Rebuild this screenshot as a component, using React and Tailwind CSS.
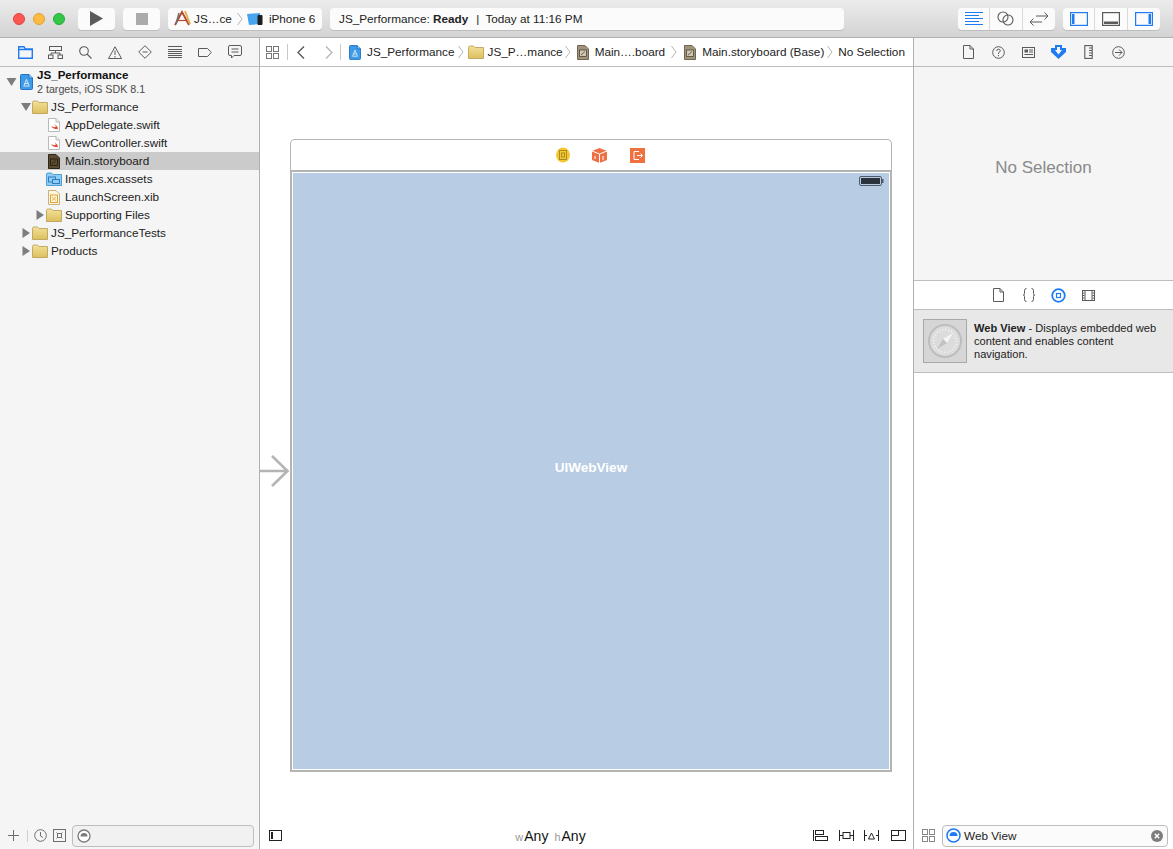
import React from "react";

const S = ({ w = 16, h = 16, vb, children, className = "", stroke = "#5a5a5a", sw = 1.2, fill = "none" }) => (
  <svg width={w} height={h} viewBox={vb || `0 0 ${w} ${h}`} fill={fill} stroke={stroke} strokeWidth={sw} className={`shrink-0 block ${className}`}>{children}</svg>
);

const Tri = ({ open, className = "" }) => (
  <svg width="10" height="10" viewBox="0 0 10 10" className={`shrink-0 ${className}`}>
    {open ? <path d="M0 1 H10 L5 9 Z" fill="#7d7d7d" /> : <path d="M1.5 0 L9 5 L1.5 10 Z" fill="#7d7d7d" />}
  </svg>
);

const Folder = ({ w = 16, h = 14 }) => (
  <svg width={w} height={h} viewBox="0 0 16 14" className="shrink-0">
    <defs><linearGradient id="fg" x1="0" y1="0" x2="0" y2="1"><stop offset="0" stopColor="#f3e19a" /><stop offset="1" stopColor="#dcbf5e" /></linearGradient></defs>
    <path d="M.5 2.5 Q.5 1 2 1 H5.5 L7 2.5 H15.5 V13.5 H.5 Z" fill="url(#fg)" stroke="#b59c4c" strokeWidth=".8" />
  </svg>
);

const Swift = () => (
  <svg width="12" height="14" viewBox="0 0 12 14" className="shrink-0">
    <path d="M.5 .5 H8 L11.5 4 V13.5 H.5 Z" fill="#fff" stroke="#b9b9b9" />
    <path d="M8 .5 V4 H11.5" fill="#eee" stroke="#b9b9b9" />
    <path d="M3 8 Q6 10 8 8.5 Q7.5 7 6 6 Q8.5 7.5 9.5 9 Q10 10.5 9.5 11.5 Q9 10.8 8 11 Q5 11.5 3 8Z" fill="#e2492f" />
  </svg>
);

const Doc = ({ dark }) => (
  <svg width="12" height="15" viewBox="0 0 12 15" className="shrink-0">
    <path d="M.5 .5 H8 L11.5 4 V14.5 H.5 Z" fill={dark ? "#5c4b30" : "#a2947c"} stroke={dark ? "#2d2518" : "#6f6650"} />
    <rect x="2.5" y="5" width="7" height="6.5" fill={dark ? "#5c4b30" : "#cfc7b6"} stroke={dark ? "#1f1a10" : "#4f4737"} strokeWidth=".8" />
    <path d="M4 10 L8 6.5" stroke={dark ? "#1f1a10" : "#4f4737"} strokeWidth=".8" />
  </svg>
);

const Proj = ({ w = 13, h = 16 }) => (
  <svg width={w} height={h} viewBox="0 0 13 16" className="shrink-0">
    <path d="M.5 1.5 Q.5 .5 1.5 .5 H9 L12.5 4 V14.5 Q12.5 15.5 11.5 15.5 H1.5 Q.5 15.5 .5 14.5 Z" fill="#3f9ae8" stroke="#2273c4" />
    <path d="M9 .5 V4 H12.5" fill="#a8d4f7" stroke="#2273c4" />
    <path d="M3.5 12 H9.5 M4 11.5 L6.5 5.5 L9 11.5 M4.8 9.5 H8.2" stroke="#e6f3fe" fill="none" strokeWidth=".9" />
  </svg>
);

const Row = ({ pl, tri, icon, text, selected, bold }) => (
  <div className={`h-[18px] flex items-center shrink-0 ${selected ? "bg-[#cbcbcb]" : ""}`} style={{ paddingLeft: pl }}>
    <div className="w-[11px] -ml-[11px] flex items-center shrink-0">{tri !== undefined && <Tri open={tri} />}</div>
    <div className="w-[16px] flex justify-center shrink-0">{icon}</div>
    <span className={`ml-[3px] text-[#1c1c1c] whitespace-nowrap ${bold ? "font-bold" : ""}`}>{text}</span>
  </div>
);

const Pill = ({ className = "", children }) => (
  <div className={`h-[22px] bg-[#fbfbfb] rounded-[4px] shadow-[0_1px_0_#bdbdbd] flex items-center ${className}`}>{children}</div>
);

const Seg = ({ children, last }) => (
  <div className={`w-[32.33px] h-full flex items-center justify-center ${last ? "" : "border-r border-[#dadada]"}`}>{children}</div>
);

const Chev = () => (
  <svg width="6" height="14" viewBox="0 0 6 14" className="shrink-0"><path d="M.5 1 L5 7 L.5 13" fill="none" stroke="#b5b5b5" /></svg>
);

const Nav = ({ children }) => <div className="w-[30px] flex items-center justify-center">{children}</div>;

function Toolbar() {
  const blue = "#1f7bf0";
  return (
    <div className="h-[38px] shrink-0 flex items-center pl-[13px] border-b border-[#b0b0b0] bg-gradient-to-b from-[#ececec] to-[#d3d3d3]">
      <div className="w-[12px] h-[12px] rounded-full bg-[#fc5753] border border-[#e0443e]" />
      <div className="w-[12px] h-[12px] rounded-full bg-[#fdbc40] border border-[#dea034] ml-[8px]" />
      <div className="w-[12px] h-[12px] rounded-full bg-[#33c748] border border-[#27aa35] ml-[8px]" />
      <Pill className="w-[37px] justify-center ml-[13px]">
        <svg width="13" height="15" viewBox="0 0 13 15"><path d="M0 0 L13 7.5 L0 15Z" fill="#5b5b5b" /></svg>
      </Pill>
      <Pill className="w-[37px] justify-center ml-[8px]"><div className="w-[12px] h-[12px] bg-[#ababab]" /></Pill>
      <Pill className="w-[154px] ml-[8px] pl-[5px]">
        <svg width="19" height="17" viewBox="0 0 19 17" className="shrink-0">
          <path d="M2 15 L9 2 L16 15" fill="none" stroke="#b4472f" strokeWidth="1.8" />
          <path d="M4.5 10.5 H13.5" stroke="#b4472f" strokeWidth="1.2" />
          <path d="M12 1 L17 14" stroke="#e0b44a" strokeWidth="2" />
          <path d="M6 3 L3 14" stroke="#6d6d6d" strokeWidth="1.5" />
        </svg>
        <span className="ml-[2px] text-[#222]">JS…ce</span>
        <div className="ml-[5px]"><Chev /></div>
        <svg width="17" height="14" viewBox="0 0 17 14" className="ml-[4px] shrink-0">
          <path d="M0 2 L13 1 L14 12 L2 13Z" fill="#48a4ee" />
          <rect x="10.5" y="3" width="5" height="10" rx="1" fill="#1d1d1d" />
        </svg>
        <span className="ml-[5px] text-[#222]">iPhone 6</span>
      </Pill>
      <Pill className="w-[514px] ml-[8px] pl-[9px] text-[#222]">
        <span>JS_Performance: <b>Ready</b></span>
        <span className="ml-[8px] mr-[6px]">|</span>
        <span>Today at 11:16 PM</span>
      </Pill>
      <Pill className="w-[97px] ml-[114px]">
        <Seg>
          <S w={18} h={14} stroke={blue} sw={1}>
            <path d="M0 .5 H18 M0 3.5 H14 M0 6.5 H18 M0 9.5 H14 M0 12.5 H18" />
          </S>
        </Seg>
        <Seg>
          <S w={17} h={15} sw={1.1}><circle cx="6" cy="6" r="5" /><circle cx="11" cy="9" r="5" /></S>
        </Seg>
        <Seg last>
          <S w={18} h={14} sw={1}><path d="M6 4 H18 M14.5 .5 L18 4 L14.5 7.5 M0 10 H12 M3.5 6.5 L0 10 L3.5 13.5" /></S>
        </Seg>
      </Pill>
      <Pill className="w-[97px] ml-[8px]">
        <Seg>
          <S w={18} h={14} stroke={blue} sw={1.2}><rect x=".6" y=".6" width="16.8" height="12.8" /><rect x="2" y="2" width="2.5" height="10" fill={blue} stroke="none" /></S>
        </Seg>
        <Seg>
          <S w={18} h={14} sw={1.2}><rect x=".6" y=".6" width="16.8" height="12.8" /><rect x="2" y="9.5" width="14" height="2.5" fill="#5a5a5a" stroke="none" /></S>
        </Seg>
        <Seg last>
          <S w={18} h={14} stroke={blue} sw={1.2}><rect x=".6" y=".6" width="16.8" height="12.8" /><rect x="13.5" y="2" width="2.5" height="10" fill={blue} stroke="none" /></S>
        </Seg>
      </Pill>
    </div>
  );
}

function Sidebar() {
  return (
    <div className="w-[260px] shrink-0 bg-[#f5f5f5] border-r border-[#b0b0b0] flex flex-col">
      <div className="h-[29px] shrink-0 border-b border-[#bdbdbd] flex items-center pl-[10px]">
        <Nav><S w={15} h={13} stroke="#1f7bf0" sw={1.4}><path d="M.7 12.3 V.7 H6 L7.3 3 H14.3 V12.3 Z M.7 3.5 H14.3" /></S></Nav>
        <Nav><S w={15} h={13} sw={1}><rect x="1.5" y=".5" width="12" height="4" /><path d="M7.5 4.5 V7 M3 9 V7 H12 V9" /><rect x=".5" y="9" width="4.5" height="3.5" /><rect x="10" y="9" width="4.5" height="3.5" /></S></Nav>
        <Nav><S w={13} h={13} sw={1.1}><circle cx="5" cy="5" r="4.3" /><path d="M8 8 L12.5 12.5" /></S></Nav>
        <Nav><S w={14} h={13} sw={1}><path d="M7 .8 L13.5 12.5 H.5 Z M7 4.5 V9 M7 10 V11.5" /></S></Nav>
        <Nav><S w={14} h={14} sw={1}><path d="M7 .7 L13.3 7 L7 13.3 L.7 7 Z M4.5 7 H9.5" /></S></Nav>
        <Nav><S w={14} h={12} sw={1}><path d="M0 .5 H14 M0 3.5 H14 M0 5.5 H14 M0 7.5 H14 M0 9.5 H14 M0 11.5 H14" /></S></Nav>
        <Nav><S w={14} h={9} sw={1}><path d="M.5 .5 H9.5 L13.3 4.5 L9.5 8.5 H.5 Z" /></S></Nav>
        <Nav><S w={14} h={14} sw={1}><path d="M2 .5 H12 Q13.5 .5 13.5 2 V9 Q13.5 10.5 12 10.5 H6 L3.5 13 V10.5 H2 Q.5 10.5 .5 9 V2 Q.5 .5 2 .5 Z M3.5 4 H10.5 M3.5 7 H10.5" /></S></Nav>
      </div>
      <div className="flex-1 flex flex-col">
        <div className="h-[31px] flex items-center pl-[6px] pb-[2px] shrink-0">
          <Tri open className="w-[11px]" />
          <div className="ml-[3px]"><Proj /></div>
          <div className="ml-[4px] flex flex-col leading-[14px]">
            <span className="font-bold text-[#111] text-[11.6px]">JS_Performance</span>
            <span className="text-[#4a4a4a] text-[10.7px]">2 targets, iOS SDK 8.1</span>
          </div>
        </div>
        <Row pl={32} tri icon={<Folder />} text="JS_Performance" />
        <Row pl={46} icon={<Swift />} text="AppDelegate.swift" />
        <Row pl={46} icon={<Swift />} text="ViewController.swift" />
        <Row pl={46} selected icon={<Doc dark />} text="Main.storyboard" />
        <Row pl={46} icon={<svg width="16" height="14" viewBox="0 0 16 14"><path d="M.5 2 Q.5 1 2 1 H5.5 L7 2.5 H15.5 V13.5 H.5 Z" fill="#8fcdf4" stroke="#4f9fd6" /><rect x="2.5" y="5" width="7" height="5" fill="none" stroke="#2c7cbf" /><rect x="6.5" y="7.5" width="7" height="4" fill="#8fcdf4" stroke="#2c7cbf" /></svg>} text="Images.xcassets" />
        <Row pl={46} icon={<svg width="12" height="15" viewBox="0 0 12 15"><path d="M.5 .5 H8 L11.5 4 V14.5 H.5 Z" fill="#fdf6e3" stroke="#c7b27c" /><rect x="2.5" y="5" width="7" height="7.5" fill="none" stroke="#e3a12f" /><path d="M4 7 L8 10.5 M8 7 L4 10.5" stroke="#e3a12f" strokeWidth=".8" /></svg>} text="LaunchScreen.xib" />
        <Row pl={46} tri={false} icon={<Folder />} text="Supporting Files" />
        <Row pl={32} tri={false} icon={<Folder />} text="JS_PerformanceTests" />
        <Row pl={32} tri={false} icon={<Folder />} text="Products" />
      </div>
      <div className="h-[27px] shrink-0 flex items-center pl-[8px] pr-[5px]">
        <S w={11} h={11} stroke="#6e6e6e" sw={1}><path d="M5.5 0 V11 M0 5.5 H11" /></S>
        <div className="w-px h-[12px] bg-[#cfcfcf] ml-[8px]" />
        <S w={13} h={13} stroke="#6e6e6e" sw={1} className="ml-[6px]"><circle cx="6.5" cy="6.5" r="5.8" /><path d="M6.5 3 V7 L9 8.5" /></S>
        <S w={13} h={13} stroke="#6e6e6e" sw={1} className="ml-[6px]"><rect x=".5" y=".5" width="12" height="12" /><path d="M3.5 3.5 L9.5 9.5 M9.5 3.5 L3.5 9.5" /><rect x="4.5" y="4.5" width="4" height="4" fill="#f5f5f5" /></S>
        <div className="flex-1 ml-[6px] h-[22px] rounded-[4px] border border-[#bdbdbd] bg-[#f1f1f1] flex items-center pl-[4px]">
          <svg width="14" height="14" viewBox="0 0 14 14"><circle cx="7" cy="7" r="6" fill="#fff" stroke="#7b7b7b" strokeWidth="1.3" /><path d="M3.5 7.5 A3.5 3.5 0 0 1 10.5 7.5 Z" fill="#7b7b7b" /></svg>
        </div>
      </div>
    </div>
  );
}

function JumpBar() {
  return (
    <div className="h-[29px] shrink-0 border-b border-[#bdbdbd] flex items-center pl-[6px] text-[#222] whitespace-nowrap">
      <S w={13} h={13} stroke="#777" sw={1}><rect x=".5" y=".5" width="5" height="5" /><rect x="7.5" y=".5" width="5" height="5" /><rect x=".5" y="7.5" width="5" height="5" /><rect x="7.5" y="7.5" width="5" height="5" /></S>
      <div className="w-px h-[16px] bg-[#c8c8c8] ml-[8px]" />
      <S w={8} h={13} stroke="#555" sw={1.3} className="ml-[9px]"><path d="M7 .5 L1 6.5 L7 12.5" /></S>
      <S w={8} h={13} stroke="#b5b5b5" sw={1.3} className="ml-[20px]"><path d="M1 .5 L7 6.5 L1 12.5" /></S>
      <div className="w-px h-[16px] bg-[#c8c8c8] ml-[7px]" />
      <div className="ml-[8px] flex items-center"><Proj w={12} h={15} /></div>
      <span className="ml-[6px]">JS_Performance</span>
      <div className="ml-[3px]"><Chev /></div>
      <div className="ml-[4px]"><Folder w={16} h={14} /></div>
      <span className="ml-[4px]">JS_P…mance</span>
      <div className="ml-[2px]"><Chev /></div>
      <div className="ml-[6px]"><Doc /></div>
      <span className="ml-[6px]">Main….board</span>
      <div className="ml-[6px]"><Chev /></div>
      <div className="ml-[7px]"><Doc /></div>
      <span className="ml-[6px]">Main.storyboard (Base)</span>
      <div className="ml-[3px]"><Chev /></div>
      <span className="ml-[5px]">No Selection</span>
    </div>
  );
}

function Canvas() {
  return (
    <div className="flex-1 relative pl-[30px] pr-[21px] pt-[72px]">
      <svg width="30" height="36" viewBox="0 0 30 36" className="absolute left-0 top-[386px]" fill="none" stroke="#b4b4b4" strokeWidth="2.6">
        <path d="M0 18 H27.5 M12 3 L27.5 18 L12 33" />
      </svg>
      <div className="h-[633px] flex flex-col">
        <div className="h-[31px] shrink-0 flex items-center justify-center pl-[18px] bg-white rounded-t-[5px] border-t border-x border-[#b4b4b4]">
          <svg width="14" height="16" viewBox="0 0 14 16"><ellipse cx="7" cy="8" rx="7" ry="7.5" fill="#f5c92e" /><rect x="3.5" y="3.5" width="7" height="9" fill="none" stroke="#a9892a" /><rect x="5.5" y="6" width="3" height="4" fill="none" stroke="#a9892a" /></svg>
          <svg width="15" height="15" viewBox="0 0 15 15" className="ml-[22px]"><path d="M7.5 0 L15 3 V12 L7.5 15 L0 12 V3 Z" fill="#ee6f43" /><path d="M0 3 L7.5 6 L15 3 M7.5 6 V15" stroke="#fff" fill="none" /><path d="M3 8 V11 M11 8 V12" stroke="#fff" /></svg>
          <svg width="15" height="15" viewBox="0 0 15 15" className="ml-[23px]"><rect width="15" height="15" fill="#f0703f" /><path d="M9 3.5 H4 V11.5 H9 M7 7.5 H12.5 M10.5 5.5 L12.5 7.5 L10.5 9.5" stroke="#fff" fill="none" /></svg>
        </div>
        <div className="flex-1 border-2 border-[#b4b4b4] bg-white p-px flex flex-col">
          <div className="flex-1 bg-[#b8cce4] relative flex items-center justify-center pb-[6px]">
            <span className="font-bold text-[13.5px] text-white">UIWebView</span>
            <svg width="25" height="10" viewBox="0 0 25 10" className="absolute top-[3px] right-[5px]">
              <rect x=".5" y=".5" width="22" height="9" rx="1.5" fill="none" stroke="#4f5b6b" />
              <rect x="2" y="2" width="19" height="6" fill="#2c3440" />
              <rect x="23" y="3" width="1.5" height="4" fill="#4f5b6b" />
            </svg>
          </div>
        </div>
      </div>
    </div>
  );
}

function BottomBar() {
  return (
    <div className="h-[27px] shrink-0 flex items-center pl-[9px] pr-[7px]">
      <S w={13} h={11} stroke="#222" sw={1}><rect x=".5" y=".5" width="12" height="10" /><rect x="2" y="2" width="2" height="7" fill="#222" stroke="none" /></S>
      <div className="flex-1 flex justify-center items-baseline text-[14px] text-[#111] pl-[6px]">
        <span className="text-[11px] text-[#999] mr-px">w</span><span>Any</span>
        <span className="text-[11px] text-[#999] ml-[6px] mr-px">h</span><span>Any</span>
      </div>
      <S w={15} h={11} stroke="#222" sw={1}><path d="M.5 0 V11" /><rect x="2.5" y=".5" width="8" height="4" /><rect x="2.5" y="6.5" width="12" height="4" /></S>
      <S w={15} h={11} stroke="#222" sw={1} className="ml-[11px]"><path d="M.5 0 V11 M14.5 0 V11 M.5 5.5 H4 M11 5.5 H14.5" /><rect x="4" y="2.5" width="7" height="6" /></S>
      <S w={15} h={11} stroke="#222" sw={1} className="ml-[10px]"><path d="M.5 0 V11 M14.5 0 V11 M.5 5.5 H3 M12 5.5 H14.5 M7.5 3 L10.5 9 H4.5 Z" /></S>
      <S w={15} h={11} stroke="#222" sw={1} className="ml-[12px]"><rect x=".5" y=".5" width="14" height="10" /><path d="M.5 5.5 H7.5 V.5" /></S>
    </div>
  );
}

function Inspector() {
  const blue = "#1f7bf0";
  return (
    <div className="w-[259px] shrink-0 flex flex-col">
      <div className="h-[29px] shrink-0 bg-[#f5f5f5] border-b border-[#bdbdbd] flex items-center justify-center">
        <Nav><S w={11} h={14} sw={1}><path d="M.5 .5 H7 L10.5 4 V13.5 H.5 Z M7 .5 V4 H10.5" /></S></Nav>
        <Nav><svg width="13" height="13" viewBox="0 0 13 13" className="block"><circle cx="6.5" cy="6.5" r="5.8" fill="none" stroke="#5a5a5a" /><path d="M4.7 5 Q4.7 3.2 6.5 3.2 Q8.3 3.2 8.3 4.8 Q8.3 5.8 6.5 6.8 V8 M6.5 9 V10.2" fill="none" stroke="#5a5a5a" /></svg></Nav>
        <Nav><S w={13} h={11} sw={1}><rect x=".5" y=".5" width="12" height="10" /><rect x="2.5" y="2.5" width="3.5" height="3" fill="#5a5a5a" stroke="none" /><path d="M7 3 H11 M7 5 H11 M2.5 7.5 H11" /></S></Nav>
        <Nav><svg width="15" height="14" viewBox="0 0 15 14" className="block"><path d="M4 0 H11 V3 H15 V7 L7.5 14 L0 7 V3 H4 Z" fill={blue} /><path d="M6 2 H9 V5 H11 L7.5 9.5 L4 5 H6 Z" fill="#f5f5f5" /></svg></Nav>
        <Nav><S w={9} h={14} sw={1.1}><rect x=".8" y=".6" width="7.4" height="12.8" /><path d="M5 3 H8 M5 5.5 H8 M5 8 H8 M5 10.5 H8" /></S></Nav>
        <Nav><S w={13} h={13} sw={1}><circle cx="6.5" cy="6.5" r="5.8" /><path d="M3 6.5 H10 M7 3.5 L10 6.5 L7 9.5" /></S></Nav>
      </div>
      <div className="h-[214px] shrink-0 bg-[#f5f5f5] border-b border-[#bdbdbd] flex items-center justify-center text-[17px] text-[#8a8a8a] pb-[12px]">No Selection</div>
      <div className="h-[29px] shrink-0 border-b border-[#bdbdbd] flex items-center justify-center">
        <Nav><S w={11} h={14} sw={1}><path d="M.5 .5 H7 L10.5 4 V13.5 H.5 Z M7 .5 V4 H10.5" /></S></Nav>
        <Nav><S w={12} h={14} sw={1}><path d="M3.5 .5 Q1.5 .5 1.5 2.5 V5.5 Q1.5 7 .3 7 Q1.5 7 1.5 8.5 V11.5 Q1.5 13.5 3.5 13.5 M8.5 .5 Q10.5 .5 10.5 2.5 V5.5 Q10.5 7 11.7 7 Q10.5 7 10.5 8.5 V11.5 Q10.5 13.5 8.5 13.5" /></S></Nav>
        <Nav><S w={15} h={15} stroke={blue} sw={1.8}><circle cx="7.5" cy="7.5" r="6.3" /><rect x="5.5" y="5.5" width="4" height="4" strokeWidth="1.2" /></S></Nav>
        <Nav><S w={13} h={11} sw={1}><rect x=".5" y=".5" width="12" height="10" /><path d="M3 .5 V10.5 M10 .5 V10.5 M1 3 H2.5 M1 5.5 H2.5 M1 8 H2.5 M10.5 3 H12 M10.5 5.5 H12 M10.5 8 H12" /></S></Nav>
      </div>
      <div className="h-[63px] shrink-0 bg-[#e8e8e8] border-b border-[#bdbdbd] flex items-center pl-[9px]">
        <div className="w-[44px] h-[44px] bg-[#d6d6d6] border border-[#a8a8a8] flex items-center justify-center shrink-0">
          <svg width="34" height="34" viewBox="0 0 34 34">
            <circle cx="17" cy="17" r="16" fill="#dcdcdc" stroke="#bdbdbd" strokeWidth="2" />
            <circle cx="17" cy="17" r="11.5" fill="none" stroke="#f2f2f2" strokeWidth="2" strokeDasharray="1 2" />
            <path d="M25 9 L19 19 L15 15 Z" fill="#f5f5f5" />
            <path d="M9 25 L15 15 L19 19 Z" fill="#c2c2c2" />
          </svg>
        </div>
        <div className="ml-[7px] text-[11.1px] leading-[13px] text-[#222] w-[190px]"><b>Web View</b> - Displays embedded web content and enables content navigation.</div>
      </div>
      <div className="flex-1" />
      <div className="h-[27px] shrink-0 flex items-center pl-[8px] pr-[5px]">
        <S w={13} h={13} stroke="#888" sw={1}><rect x=".5" y=".5" width="5" height="5" /><rect x="7.5" y=".5" width="5" height="5" /><rect x=".5" y="7.5" width="5" height="5" /><rect x="7.5" y="7.5" width="5" height="5" /></S>
        <div className="flex-1 ml-[7px] h-[22px] rounded-[4px] border border-[#bdbdbd] bg-[#fbfbfb] flex items-center pl-[3px] pr-[4px]">
          <svg width="15" height="15" viewBox="0 0 15 15" className="shrink-0"><circle cx="7.5" cy="7.5" r="6.5" fill="#fff" stroke="#1f7bf0" strokeWidth="1.5" /><path d="M3.5 8 A4 4 0 0 1 11.5 8 Z" fill="#1f7bf0" /></svg>
          <span className="ml-[3px] flex-1 text-[#222]">Web View</span>
          <svg width="12" height="12" viewBox="0 0 12 12" className="shrink-0"><circle cx="6" cy="6" r="6" fill="#7d7d7d" /><path d="M3.8 3.8 L8.2 8.2 M8.2 3.8 L3.8 8.2" stroke="#fff" strokeWidth="1.4" /></svg>
        </div>
      </div>
    </div>
  );
}

export default function App() {
  return (
    <div className="w-[1173px] h-[849px] flex flex-col bg-white overflow-hidden text-[11.75px] leading-none" style={{ fontFamily: '"Liberation Sans", Arial, sans-serif' }}>
      <Toolbar />
      <div className="flex-1 flex min-h-0">
        <Sidebar />
        <div className="w-[654px] shrink-0 border-r border-[#b0b0b0] flex flex-col">
          <JumpBar />
          <Canvas />
          <BottomBar />
        </div>
        <Inspector />
      </div>
    </div>
  );
}
